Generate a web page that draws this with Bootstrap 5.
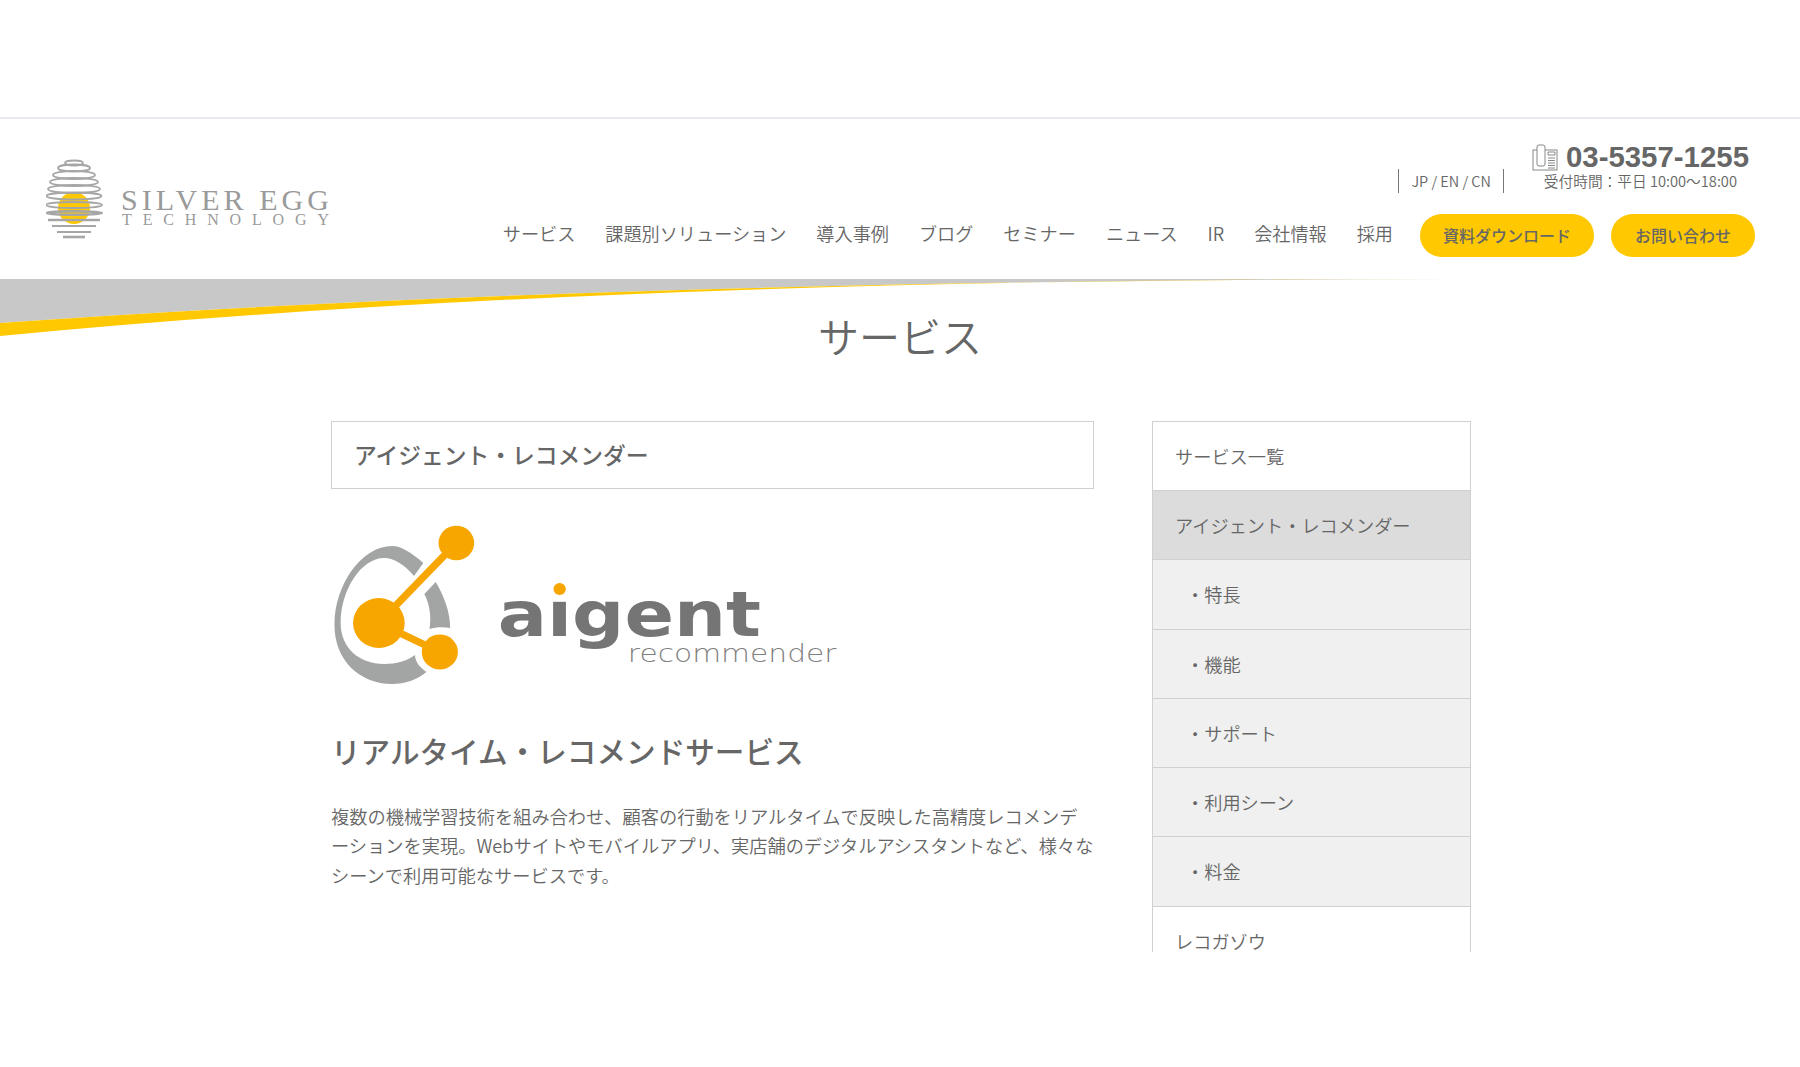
<!DOCTYPE html>
<html lang="ja">
<head>
  <meta charset="UTF-8">
  <meta name="viewport" content="width=device-width,initial-scale=1">
  <title>アイジェント・レコメンダー | サービス</title>
  <link href="https://cdn.jsdelivr.net/npm/bootstrap@5.3.3/dist/css/bootstrap.min.css" rel="stylesheet">
  <style>
    body { background: #fff; color: #666; font-family: "Noto Sans CJK JP", "Liberation Sans", sans-serif; font-weight: 350; overflow: hidden; }
    .top-strip { height: 119px; border-bottom: 2px solid #e6e8f4; }
    .site-head { height: 160px; padding: 0 45px 0 46px; }
    .brand-link { margin-top: 40px; }
    .head-right { height: 160px; }
    .tel-row { margin-top: 21px; height: 55px; padding-right: 6px; }
    .lang-box { border-left: 1px solid #777; border-right: 1px solid #777; height: 24px; line-height: 24px; padding: 0 12px; font-size: 14.5px; color: #666; margin-top: 29px; margin-right: 28px; }
    .tel-num { font-family: "Liberation Sans", sans-serif; font-weight: 700; font-size: 29.4px; line-height: 34px; color: #666; }
    .tel-hours { font-size: 14.7px; line-height: 22px; color: #666; margin-top: -4px; padding-right: 12px; text-align: right; }
    .main-nav { margin-top: 19px; }
    .main-nav .nav-link { color: #666; font-size: 18.15px; line-height: 42px; padding: 0; margin-right: 30px; margin-top: -5px; }
    .main-nav .nav-link.last-link { margin-right: 27px; }
    .pill-btn { background: #ffc800; color: #666; font-size: 16px; font-weight: 500; height: 43px; line-height: 43px; padding: 0; border: 0; }
    .pill-dl { width: 174px; margin-right: 17px; }
    .pill-contact { width: 144px; }
    .hero-band { height: 142px; }
    .hero-band svg { position: absolute; top: 0; left: 0; }
    .page-title { font-size: 41px; font-weight: 350; line-height: 60px; padding-top: 26px; margin: 0; position: relative; color: #666; }
    .content-wrap { width: 1140px; margin-left: 331px; height: 531px; overflow: hidden; }
    .main-col { width: 763px; margin-right: 58px; }
    .side-col { width: 319px; }
    .box-title { border: 1px solid #d0d0d0; height: 68px; line-height: 65px; padding-left: 22px; font-size: 22.75px; font-weight: 500; margin: 0; color: #666; }
    .aigent-logo { display: block; margin-top: 27px; }
    .lead-head { font-size: 29.6px; font-weight: 500; line-height: 44px; margin: 33px 0 0; color: #666; }
    .body-copy { font-size: 18.23px; line-height: 29.4px; margin: 29px 0 0; color: #666; }
    .side-list .list-group-item { height: 69.3px; line-height: 69px; padding: 0 0 0 22px; font-size: 18.2px; color: #666; border-color: #d0d0d0; background: #fff; }
    .side-list .list-group-item:first-child { height: 70px; }
    .side-list .list-group-item.on { background: #dcdcdc; }
    .side-list .list-group-item.sub { background: #f0f0f0; padding-left: 33px; }
  </style>
</head>
<body>
<div class="top-strip"></div>
<header class="site-head d-flex justify-content-between">
  <a class="brand-link d-block" href="#" aria-label="Silver Egg Technology">
    <svg width="290" height="84" viewBox="46 159 290 84">
      <circle cx="74" cy="208" r="16" fill="#ffc800"/>
      <g fill="none" stroke="#a6a6a6" stroke-width="1.8">
        <ellipse cx="74" cy="163" rx="9" ry="2.5"/>
        <ellipse cx="74" cy="168" rx="16" ry="3.5"/>
        <ellipse cx="74" cy="175" rx="21" ry="4"/>
        <ellipse cx="74" cy="182" rx="24" ry="4"/>
        <ellipse cx="74" cy="189" rx="26" ry="4"/>
        <ellipse cx="74" cy="196" rx="27.5" ry="3.5"/>
        <ellipse cx="74" cy="205" rx="28" ry="3"/>
      </g>
      <g fill="none" stroke="#a6a6a6" stroke-width="2.4">
        <ellipse cx="74" cy="213" rx="28" ry="1.8"/>
        <path d="M48 220h52"/>
        <path d="M52 226h44" stroke-width="2"/>
        <path d="M57 232h34" stroke-width="2"/>
        <path d="M63 237h22" stroke-width="2.6"/>
      </g>
      <text x="121" y="210" font-family="Liberation Serif" font-size="30" fill="#9a9a9a" textLength="208">SILVER EGG</text>
      <text x="122" y="225" font-family="Liberation Serif" font-size="16" fill="#9a9a9a" textLength="207">TECHNOLOGY</text>
    </svg>
  </a>
  <div class="head-right d-flex flex-column align-items-end">
    <div class="tel-row d-flex">
      <div class="lang-box">JP / EN / CN</div>
      <div>
        <div class="d-flex align-items-center">
          <svg class="me-2" width="26" height="27" viewBox="0 0 26 27" fill="none" stroke="#888" stroke-width="1">
            <rect x="1" y="6" width="24" height="20"/>
            <rect x="5" y="1" width="8" height="21" rx="2" fill="#fff"/>
            <path d="M16 8h7v3h-7zM16 14h7M16 16.500h7M16 19h7M16 21.500h7M16 24h7"/>
          </svg>
          <span class="tel-num">03-5357-1255</span>
        </div>
        <div class="tel-hours">受付時間：平日 10:00〜18:00</div>
      </div>
    </div>
    <nav class="main-nav nav align-items-center">
      <a class="nav-link" href="#">サービス</a>
      <a class="nav-link" href="#">課題別ソリューション</a>
      <a class="nav-link" href="#">導入事例</a>
      <a class="nav-link" href="#">ブログ</a>
      <a class="nav-link" href="#">セミナー</a>
      <a class="nav-link" href="#">ニュース</a>
      <a class="nav-link" href="#">IR</a>
      <a class="nav-link" href="#">会社情報</a>
      <a class="nav-link last-link" href="#">採用</a>
      <a class="btn rounded-pill pill-btn pill-dl" href="#">資料ダウンロード</a>
      <a class="btn rounded-pill pill-btn pill-contact" href="#">お問い合わせ</a>
    </nav>
  </div>
</header>
<section class="hero-band position-relative">
  <svg width="1800" height="60" viewBox="0 279 1800 60">
    <defs>
      <linearGradient id="swoosh" x1="0" x2="1" y1="0" y2="0">
        <stop offset="0" stop-color="#ffc800"/>
        <stop offset=".8" stop-color="#ffc800"/>
        <stop offset="1" stop-color="#ffc800" stop-opacity=".15"/>
      </linearGradient>
    </defs>
    <path d="M0 279H1455Q600 280 0 323Z" fill="#c8c8c8"/>
    <path d="M0 323Q600 280 1455 279Q600 278 0 336Z" fill="url(#swoosh)"/>
  </svg>
  <h1 class="page-title text-center">サービス</h1>
</section>
<main class="content-wrap d-flex">
  <article class="main-col">
    <h2 class="box-title">アイジェント・レコメンダー</h2>
    <svg class="aigent-logo" width="510" height="180" viewBox="330.65 516 493.7 180" preserveAspectRatio="none">
      <path d="M420 563C408 552 398 546 390 546C360 546 334 585 334 625C334 660 358 684 390 684C402 684 414 680 423 672C416 667 412 661 412 655C404 661 394 664 382 664C358 664 340 648 340 623C340 590 360 558 382 558C392 558 402 565 411 576Z" fill="#a3a5a4"/>
      <path d="M432 582C440 596 446 612 446 628C440 627 432 627 426 629C428 616 426 604 421 594Z" fill="#a3a5a4"/>
      <path d="M377 623L452 543M377 623L436 652" stroke="#f7a600" stroke-width="7" fill="none"/>
      <circle cx="377" cy="623" r="25" fill="#f7a600"/>
      <circle cx="452" cy="543" r="17.300" fill="#f7a600"/>
      <circle cx="436" cy="652" r="17.500" fill="#f7a600"/>
      <circle cx="552" cy="589" r="6" fill="#f7a600"/>
      <text x="492" y="636" font-family="DejaVu Sans" font-weight="700" font-size="62" fill="#757575" textLength="255" lengthAdjust="spacingAndGlyphs">aıgent</text>
      <text x="618" y="662" font-family="DejaVu Sans" font-size="25" fill="#808080" textLength="202" lengthAdjust="spacingAndGlyphs">recommender</text>
    </svg>
    <h3 class="lead-head">リアルタイム・レコメンドサービス</h3>
    <p class="body-copy">複数の機械学習技術を組み合わせ、顧客の行動をリアルタイムで反映した高精度レコメンデーションを実現。Webサイトやモバイルアプリ、実店舗のデジタルアシスタントなど、様々なシーンで利用可能なサービスです。</p>
  </article>
  <aside class="side-col">
    <div class="list-group rounded-0 side-list">
      <a class="list-group-item rounded-0" href="#">サービス一覧</a>
      <a class="list-group-item on" href="#">アイジェント・レコメンダー</a>
      <a class="list-group-item sub" href="#">・特長</a>
      <a class="list-group-item sub" href="#">・機能</a>
      <a class="list-group-item sub" href="#">・サポート</a>
      <a class="list-group-item sub" href="#">・利用シーン</a>
      <a class="list-group-item sub" href="#">・料金</a>
      <a class="list-group-item" href="#">レコガゾウ</a>
    </div>
  </aside>
</main>
</body>
</html>
